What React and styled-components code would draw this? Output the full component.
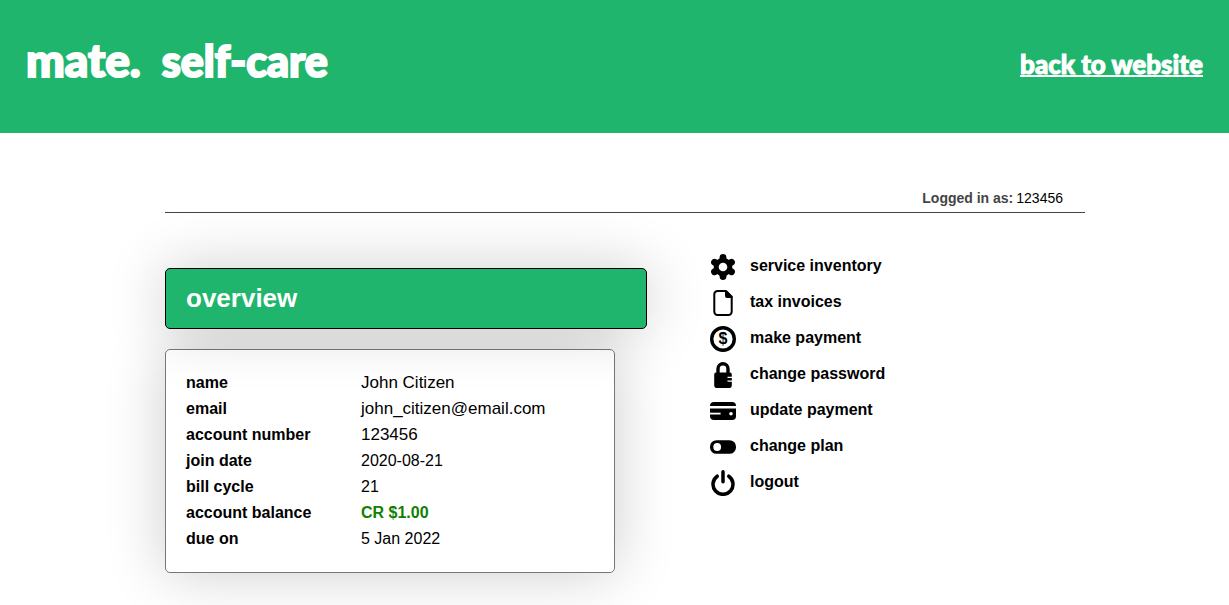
import React from "react";
import styled, { createGlobalStyle } from "styled-components";

const GlobalStyle = createGlobalStyle`
    * {
        box-sizing: border-box;
    }

    body {
        margin: 0;
        background-color: #ffffff;
        color: #000000;
        font-family: "Liberation Sans", Arial, sans-serif;
        font-size: 16px;
    }
`;

const account = [
    { label: "name", value: "John Citizen", large: true },
    { label: "email", value: "john_citizen@email.com", large: true },
    { label: "account number", value: "123456", large: true },
    { label: "join date", value: "2020-08-21" },
    { label: "bill cycle", value: "21" },
    { label: "account balance", value: "CR $1.00", credit: true },
    { label: "due on", value: "5 Jan 2022" },
];

const GearIcon = () => (
    <Icon viewBox="0 0 26 26">
        <path d="M13 3.4V7M13 19v3.6M4.5 8.3L8 10.3M18 15.7l3.5 2M4.5 17.7L8 15.7M18 10.3l3.5-2" fill="none" stroke="#000" strokeWidth="6.8" strokeLinecap="round" />
        <circle cx="13" cy="13" r="6.8" fill="none" stroke="#000" strokeWidth="5" />
        <circle cx="13" cy="13" r="4.3" fill="#fff" />
    </Icon>
);

const FileIcon = () => (
    <Icon viewBox="0 0 26 26">
        <path d="M16 1H7.5A3.2 3.2 0 0 0 4.3 4.2v17.6A3.2 3.2 0 0 0 7.5 25h11a3.2 3.2 0 0 0 3.2-3.2V6.6z" fill="none" stroke="#000" strokeWidth="2" strokeLinejoin="round" />
        <path d="M15 1h2l5.5 5.6v1.5H17a2 2 0 0 1-2-2z" />
    </Icon>
);

const DollarIcon = () => (
    <Icon viewBox="0 0 26 26">
        <circle cx="13" cy="13" r="11.3" fill="none" stroke="#000" strokeWidth="3.4" />
        <text x="13" y="18.4" textAnchor="middle" fontSize="16" fontWeight="700">$</text>
    </Icon>
);

const LockIcon = () => (
    <Icon viewBox="0 0 26 26">
        <path d="M8 12V6.8a5 5 0 0 1 10 0V12" fill="none" stroke="#000" strokeWidth="3.4" />
        <path d="M6 10.6h14a1.8 1.8 0 0 1 1.8 1.8v2.4h-4.3v1.3h4.3v2.3h-4.3v1.3h4.3v3.5A2.8 2.8 0 0 1 19 26H7a2.8 2.8 0 0 1-2.8-2.8V12.4A1.8 1.8 0 0 1 6 10.6z" />
    </Icon>
);

const CardIcon = () => (
    <Icon viewBox="0 0 26 26">
        <path d="M0 8a4 4 0 0 1 4-4h18a4 4 0 0 1 4 4z" />
        <path d="M0 10.6h26V18a4 4 0 0 1-4 4H4a4 4 0 0 1-4-4z" />
        <path d="M0 15.6h10.6" stroke="#fff" strokeWidth="1.8" />
        <circle cx="21" cy="15.7" r="1.8" fill="#fff" />
    </Icon>
);

const ToggleIcon = () => (
    <Icon viewBox="0 0 26 26">
        <rect x="0" y="6.2" width="26" height="13.6" rx="6.5" />
        <circle cx="7.2" cy="13" r="3.9" fill="#fff" />
    </Icon>
);

const PowerIcon = () => (
    <Icon viewBox="0 0 26 26">
        <path d="M7.2 6.2a10 10 0 1 0 11.6 0M13 1.8v10" fill="none" stroke="#000" strokeWidth="3.5" strokeLinecap="round" />
    </Icon>
);

const menu = [
    { text: "service inventory", icon: <GearIcon /> },
    { text: "tax invoices", icon: <FileIcon /> },
    { text: "make payment", icon: <DollarIcon /> },
    { text: "change password", icon: <LockIcon /> },
    { text: "update payment", icon: <CardIcon /> },
    { text: "change plan", icon: <ToggleIcon /> },
    { text: "logout", icon: <PowerIcon /> },
];

export default function App() {
    return (
        <>
            <GlobalStyle />
            <Header>
                <Brand>
                    <Logo href="#">mate.</Logo>
                    <Title>self-care</Title>
                </Brand>
                <BackLink href="#">back to website</BackLink>
            </Header>
            <Main>
                <Session>
                    <b>Logged in as:</b>
                    <span>123456</span>
                </Session>
                <Columns>
                    <Overview>
                        <OverviewTitle>overview</OverviewTitle>
                        <Details>
                            <Table>
                                <tbody>
                                    {account.map((row) => (
                                        <tr key={row.label}>
                                            <Label scope="row">{row.label}</Label>
                                            <Value $large={row.large} $credit={row.credit}>{row.value}</Value>
                                        </tr>
                                    ))}
                                </tbody>
                            </Table>
                        </Details>
                    </Overview>
                    <Menu>
                        {menu.map((item) => (
                            <MenuLink href="#" key={item.text}>
                                {item.icon}
                                <span>{item.text}</span>
                            </MenuLink>
                        ))}
                    </Menu>
                </Columns>
            </Main>
        </>
    );
}

const Header = styled.header`
    display: flex;
    justify-content: space-between;
    align-items: flex-start;
    min-height: 133px;
    padding: 35px 26px;
    background-color: #1fb56c;
    color: #ffffff;
    font-family: Lato, "Open Sans", sans-serif;
    font-weight: 900;
    line-height: 50px;
    -webkit-text-stroke: 2px #ffffff;
`;

const Brand = styled.div`
    display: flex;
    align-items: baseline;
    gap: 21px;
`;

const Logo = styled.a`
    color: inherit;
    font-size: 46px;
    text-decoration: none;
`;

const Title = styled.h1`
    margin: 0;
    font-size: 43px;
    font-weight: 900;
`;

const BackLink = styled.a`
    padding-top: 4px;
    color: inherit;
    font-size: 26px;
    text-decoration: underline;
    text-decoration-thickness: 2px;
    text-decoration-skip-ink: none;
    -webkit-text-stroke: 1px #ffffff;
`;

const Main = styled.main`
    padding: 52px 144px 32px 165px;
`;

const Session = styled.div`
    display: flex;
    justify-content: flex-end;
    gap: 3px;
    padding: 0 22px 0 0;
    border-bottom: 1px solid #444444;
    font-size: 14px;
    line-height: 27px;

    b {
        color: #444444;
    }
`;

const Columns = styled.div`
    display: flex;
    align-items: flex-start;
    gap: 63px;
    padding-top: 36px;
`;

const Overview = styled.section`
    width: 482px;
    padding-top: 19px;
`;

const OverviewTitle = styled.h2`
    position: relative;
    z-index: 1;
    margin: 0 0 20px;
    padding: 0 20px;
    border: 1px solid #000000;
    border-radius: 5px;
    background-color: #1fb56c;
    box-shadow: 0 0 60px rgba(0, 0, 0, 0.2);
    color: #ffffff;
    font-size: 26px;
    line-height: 59px;
`;

const Details = styled.div`
    margin-right: 32px;
    padding: 20px;
    border: 1px solid #777777;
    border-radius: 5px;
    box-shadow: 0 0 60px rgba(0, 0, 0, 0.2);
`;

const Table = styled.table`
    width: 100%;
    border-collapse: collapse;
    line-height: 26px;
`;

const Label = styled.th`
    width: 175px;
    padding: 0;
    text-align: left;
`;

const Value = styled.td`
    padding: 0;
    color: ${(props) => (props.$credit ? "#118000" : "#000000")};
    font-size: ${(props) => (props.$large ? "17px" : "16px")};
    font-weight: ${(props) => (props.$credit ? 700 : 400)};
`;

const Menu = styled.nav`
    display: flex;
    flex-direction: column;
`;

const MenuLink = styled.a`
    display: flex;
    align-items: center;
    gap: 14px;
    height: 36px;
    color: #000000;
    font-weight: 700;
    line-height: 20px;
    text-decoration: none;

    span {
        padding-bottom: 2px;
    }
`;

const Icon = styled.svg`
    flex: none;
    width: 26px;
    height: 26px;
`;
